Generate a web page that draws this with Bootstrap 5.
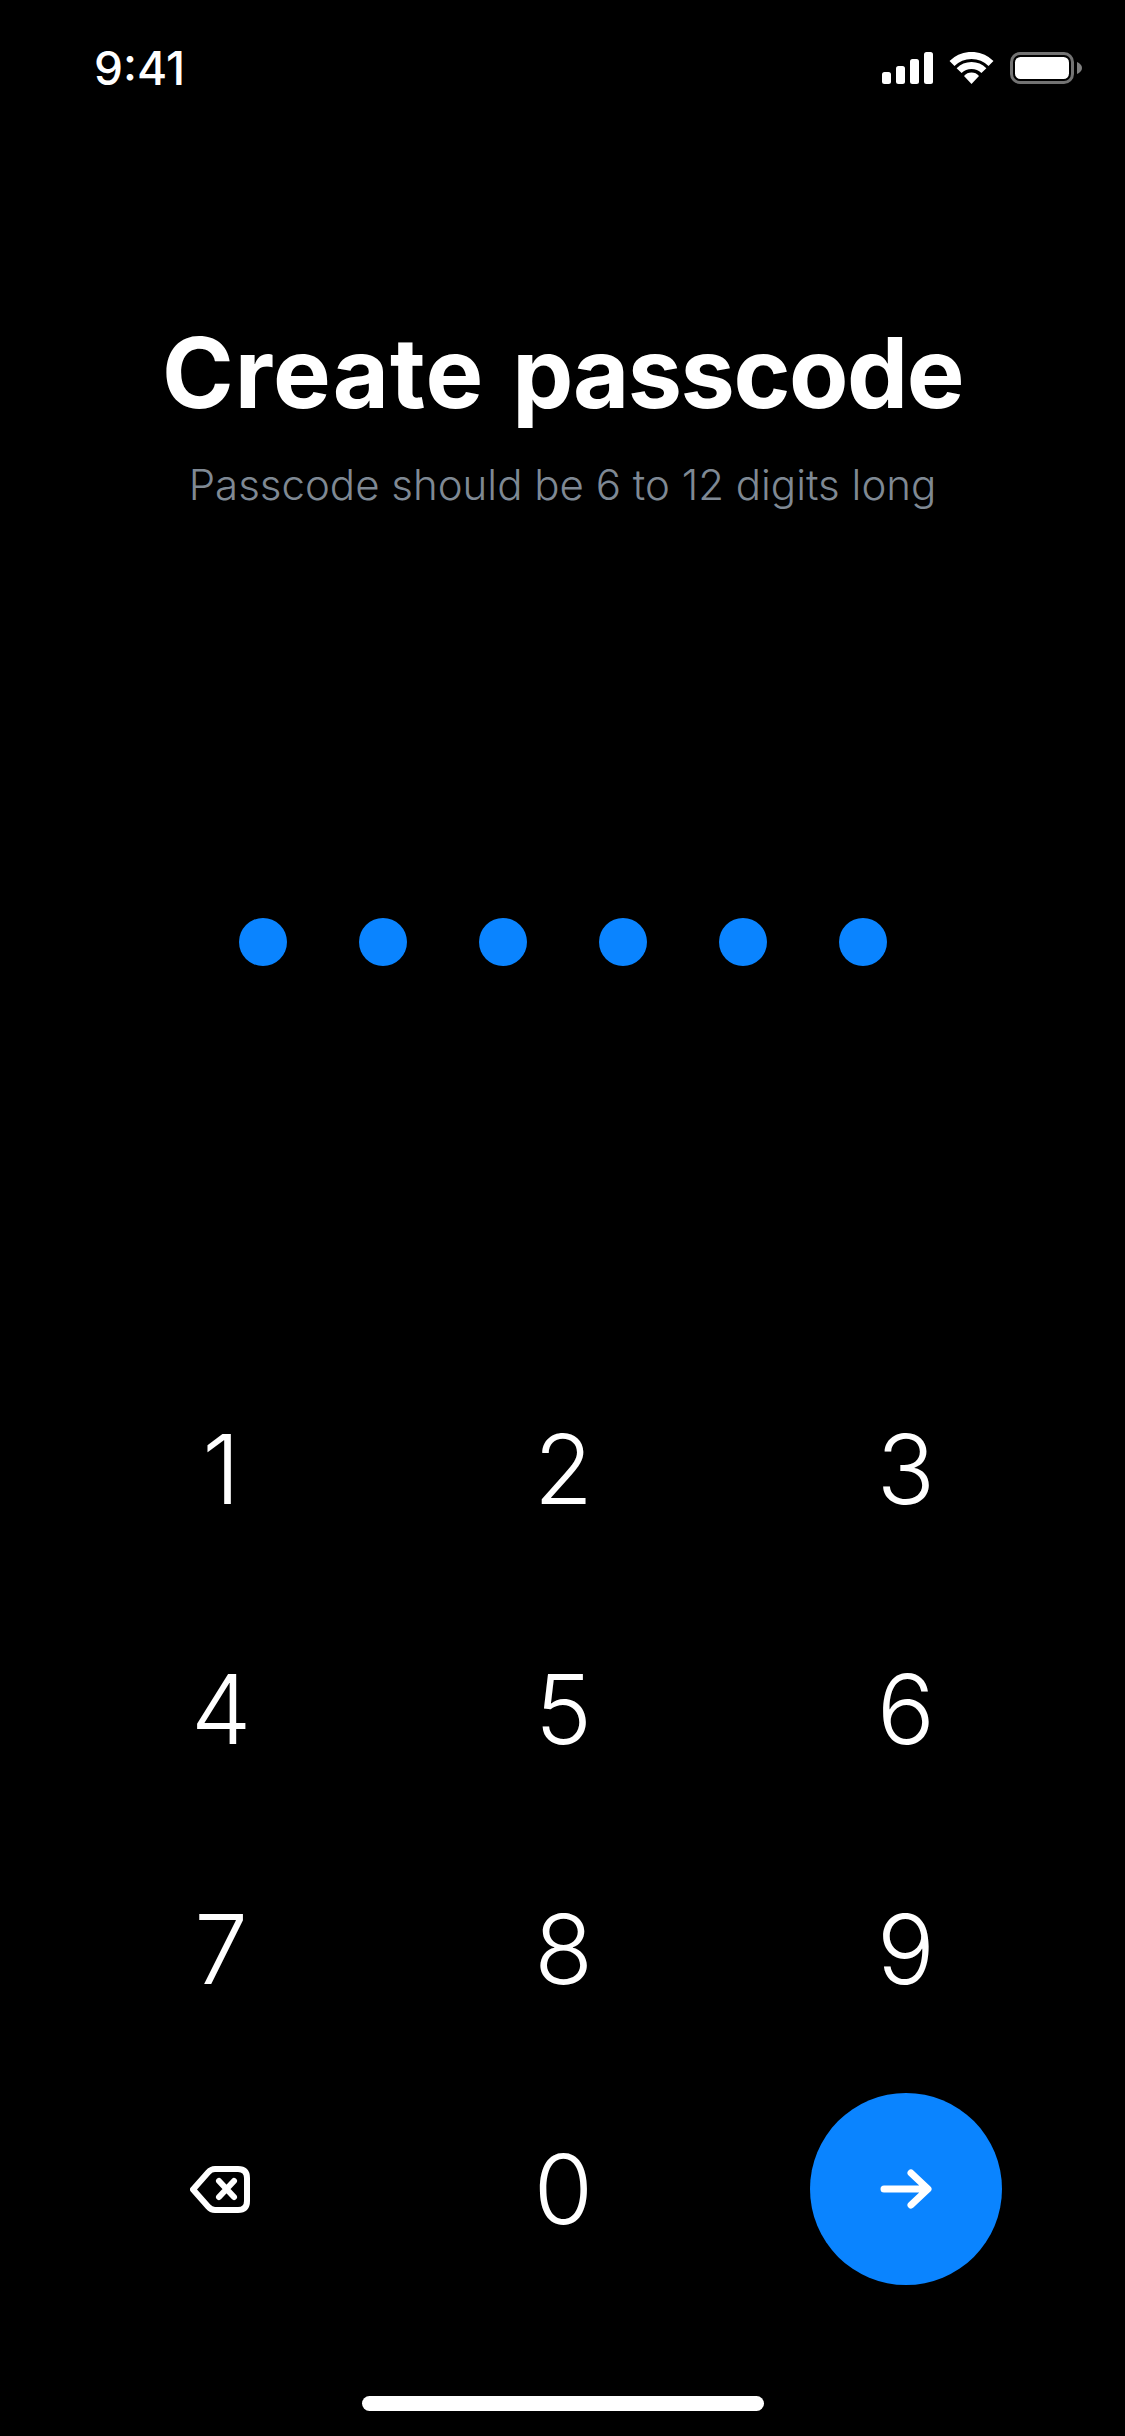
<!doctype html>
<html lang="en">
<head>
<meta charset="utf-8">
<title>Create passcode</title>
<link href="https://cdn.jsdelivr.net/npm/bootstrap@5.3.0/dist/css/bootstrap.min.css" rel="stylesheet">
<style>
html,body{background:#000;margin:0}
.screen{width:1125px;height:2436px;background:#000;color:#fff;font-family:Inter,"Liberation Sans",sans-serif;overflow:hidden}
.statusbar{height:138px;padding:0 43px 0 94px}
.clock{font-size:46px;font-weight:500;line-height:1;margin-top:-2px}
.status-icons{gap:16px;height:32px;margin-top:-2px}
.title{font-size:97px;font-weight:700;line-height:116px;margin:177px 0 0;word-spacing:5px}
.word-a{letter-spacing:1px}
.word-b{letter-spacing:-1.5px}
.subtitle{font-size:42px;font-weight:300;line-height:48px;color:#7f8994;margin:30px 0 0}
.dots{gap:72px;margin-top:409px}
.dot{width:48px;height:48px;background:#0a84ff;border-radius:50%}
.keypad{margin:383px 48px 0 50px}
.keycell{height:240px}
.keybtn{font-size:96px;font-weight:300;line-height:1;color:#fff;padding:0;border:0;width:192px;height:192px;border-radius:50%}
.keybtn:hover,.keybtn:active{color:#fff}
.delbtn svg{margin-right:3px}
.gobtn,.gobtn:hover{background:#0a84ff}
.homebar{width:402px;height:15px;background:#fff;border-radius:8px;margin-top:87px}
</style>
</head>
<body>
<main class="screen d-flex flex-column">
  <header class="statusbar d-flex justify-content-between align-items-center">
    <span class="clock">9:41</span>
    <div class="status-icons d-flex align-items-center">
      <svg width="51" height="32" viewBox="0 0 51 32" fill="#fff" aria-hidden="true"><rect x="0" y="20" width="9" height="12" rx="2.5"/><rect x="14" y="14" width="9" height="18" rx="2.5"/><rect x="28" y="7" width="9" height="25" rx="2.5"/><rect x="42" y="0" width="9" height="32" rx="2.5"/></svg>
      <svg width="45" height="32" viewBox="0 0 45 32" aria-hidden="true"><g fill="none" stroke="#fff" stroke-width="7"><path d="M3 11.500A27.500 27.500 0 0 1 42 11.500"/><path d="M10.100 18.600A17.500 17.500 0 0 1 34.900 18.600"/></g><path d="M22.500 32 15 24A10 10 0 0 1 30 24Z" fill="#fff"/></svg>
      <svg width="72" height="32" viewBox="0 0 72 32" aria-hidden="true"><rect x="1.500" y="1.500" width="61" height="29" rx="8.500" fill="none" stroke="#fff" stroke-opacity=".45" stroke-width="3"/><rect x="5" y="5" width="54" height="22" rx="5.500" fill="#fff"/><path d="M67 10v12c2.800-1 5-3.400 5-6s-2.200-5-5-6z" fill="#fff" fill-opacity=".5"/></svg>
    </div>
  </header>

  <section class="text-center">
    <h1 class="title"><span class="word-a">Create</span> <span class="word-b">passcode</span></h1>
    <p class="subtitle">Passcode should be 6 to 12 digits long</p>
  </section>

  <div class="dots d-flex justify-content-center" aria-label="6 digits entered">
    <span class="dot"></span><span class="dot"></span><span class="dot"></span><span class="dot"></span><span class="dot"></span><span class="dot"></span>
  </div>

  <div class="keypad row g-0">
    <div class="col-4 keycell d-flex align-items-center justify-content-center"><button type="button" class="btn keybtn">1</button></div>
    <div class="col-4 keycell d-flex align-items-center justify-content-center"><button type="button" class="btn keybtn">2</button></div>
    <div class="col-4 keycell d-flex align-items-center justify-content-center"><button type="button" class="btn keybtn">3</button></div>
    <div class="col-4 keycell d-flex align-items-center justify-content-center"><button type="button" class="btn keybtn">4</button></div>
    <div class="col-4 keycell d-flex align-items-center justify-content-center"><button type="button" class="btn keybtn">5</button></div>
    <div class="col-4 keycell d-flex align-items-center justify-content-center"><button type="button" class="btn keybtn">6</button></div>
    <div class="col-4 keycell d-flex align-items-center justify-content-center"><button type="button" class="btn keybtn">7</button></div>
    <div class="col-4 keycell d-flex align-items-center justify-content-center"><button type="button" class="btn keybtn">8</button></div>
    <div class="col-4 keycell d-flex align-items-center justify-content-center"><button type="button" class="btn keybtn">9</button></div>
    <div class="col-4 keycell d-flex align-items-center justify-content-center">
      <button type="button" class="btn keybtn delbtn d-flex align-items-center justify-content-center" aria-label="Delete">
        <svg width="60" height="47" viewBox="0 0 60 47" fill="none" stroke="#fff" stroke-width="6" stroke-linecap="round" stroke-linejoin="round" aria-hidden="true"><path d="M3 23.500 18 6.500Q21 3 25 3H48Q57 3 57 12V35Q57 44 48 44H25Q21 44 18 40.500Z"/><path d="M29 15 44 31M44 15 29 31"/></svg>
      </button>
    </div>
    <div class="col-4 keycell d-flex align-items-center justify-content-center"><button type="button" class="btn keybtn">0</button></div>
    <div class="col-4 keycell d-flex align-items-center justify-content-center">
      <button type="button" class="btn keybtn gobtn d-flex align-items-center justify-content-center" aria-label="Continue">
        <svg width="52" height="40" viewBox="0 0 52 40" fill="none" stroke="#fff" stroke-width="7" stroke-linecap="round" stroke-linejoin="round" aria-hidden="true"><path d="M4 20H47M31 4 48 20 31 36"/></svg>
      </button>
    </div>
  </div>

  <div class="homebar align-self-center"></div>
</main>
<script src="https://cdn.jsdelivr.net/npm/bootstrap@5.3.0/dist/js/bootstrap.bundle.min.js"></script>
</body>
</html>
